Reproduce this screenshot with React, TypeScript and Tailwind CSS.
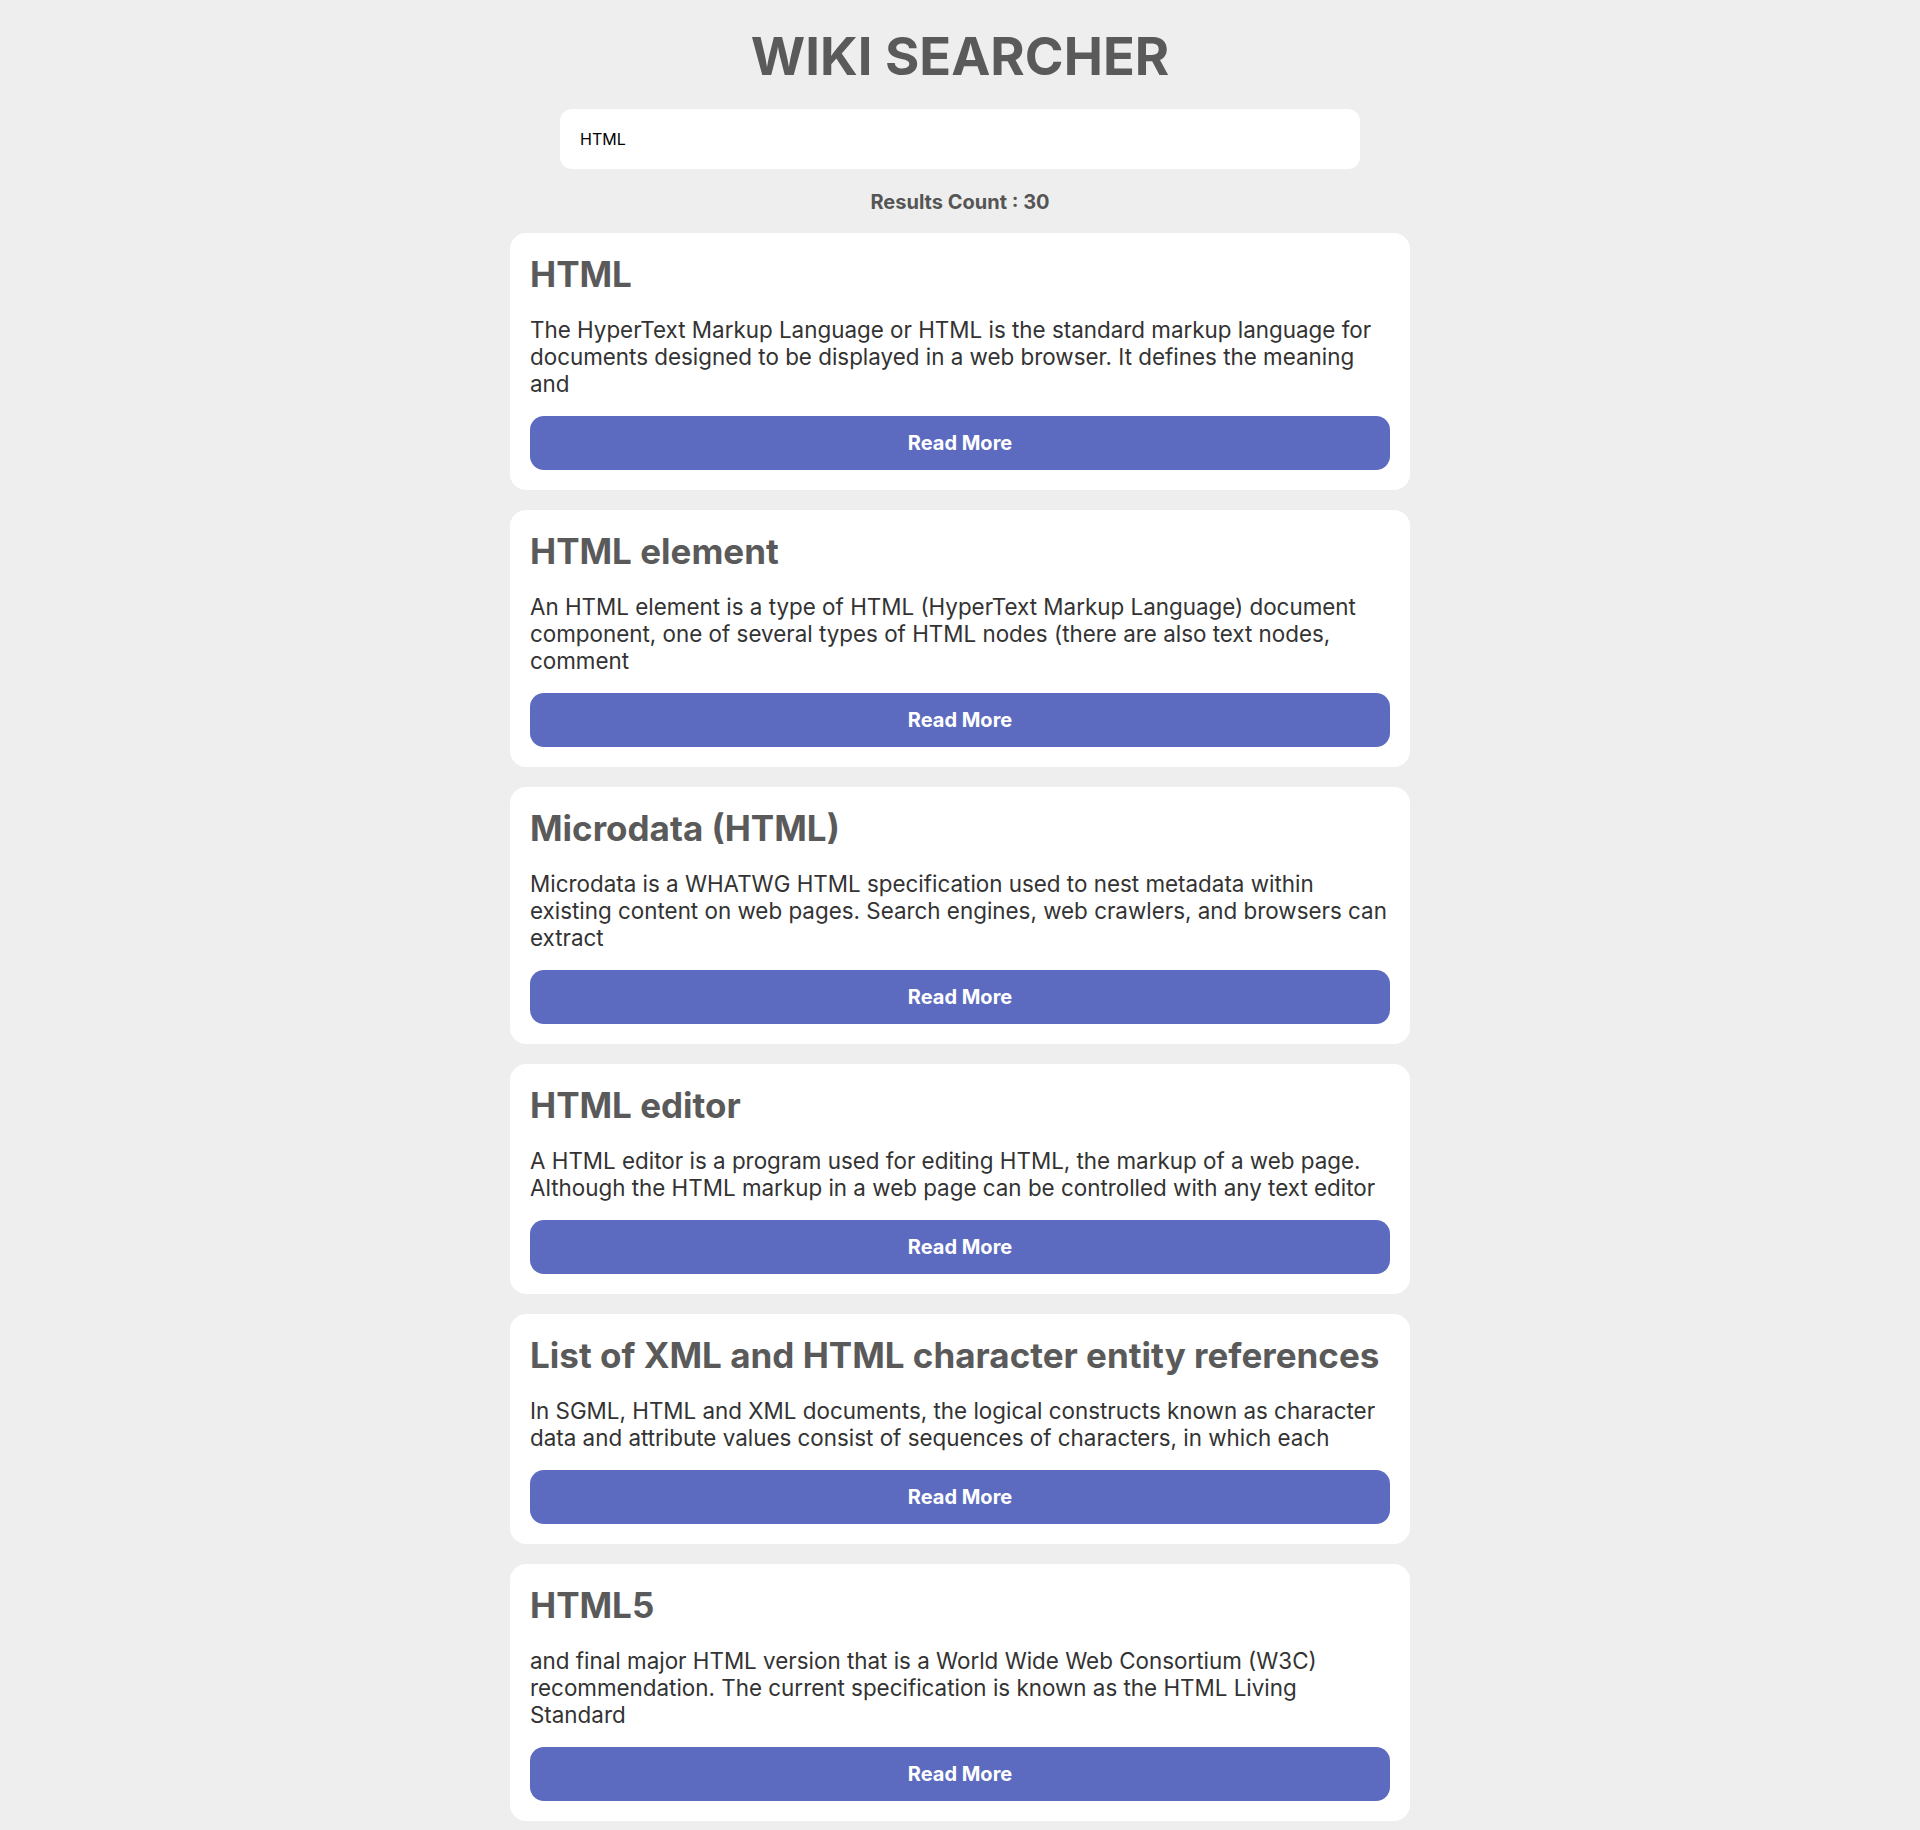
import { useState } from 'react';

interface WikiResult {
  title: string;
  snippet: string;
}

const results: WikiResult[] = [
  {
    title: 'HTML',
    snippet:
      'The HyperText Markup Language or HTML is the standard markup language for documents designed to be displayed in a web browser. It defines the meaning and',
  },
  {
    title: 'HTML element',
    snippet:
      'An HTML element is a type of HTML (HyperText Markup Language) document component, one of several types of HTML nodes (there are also text nodes, comment',
  },
  {
    title: 'Microdata (HTML)',
    snippet:
      'Microdata is a WHATWG HTML specification used to nest metadata within existing content on web pages. Search engines, web crawlers, and browsers can extract',
  },
  {
    title: 'HTML editor',
    snippet:
      'A HTML editor is a program used for editing HTML, the markup of a web page. Although the HTML markup in a web page can be controlled with any text editor',
  },
  {
    title: 'List of XML and HTML character entity references',
    snippet:
      'In SGML, HTML and XML documents, the logical constructs known as character data and attribute values consist of sequences of characters, in which each',
  },
  {
    title: 'HTML5',
    snippet:
      'and final major HTML version that is a World Wide Web Consortium (W3C) recommendation. The current specification is known as the HTML Living Standard',
  },
];

function ResultCard({ result }: { result: WikiResult }) {
  return (
    <div className="w-[900px] bg-white rounded-2xl px-5 pt-[19px] pb-5">
      <h2 className="text-[35px] leading-[44px] font-bold text-[#5a5a5a]">{result.title}</h2>
      <p className="mt-5 text-[22.4px] leading-[27px] text-[#333333]">{result.snippet}</p>
      <button className="mt-[19px] w-full h-[54px] rounded-[14px] bg-[#5c6bc0] text-white text-[20px] font-bold">
        Read More
      </button>
    </div>
  );
}

export default function App() {
  const [query, setQuery] = useState('HTML');

  return (
    <div className="min-h-screen bg-[#eeeeee] font-[Inter,sans-serif] flex flex-col items-center pt-6 pb-[9px]">
      <h1 className="text-[52.5px] leading-[65px] font-bold text-[#5a5a5a]">WIKI SEARCHER</h1>
      <input
        value={query}
        onChange={(e) => setQuery(e.target.value)}
        className="mt-5 w-[800px] h-[60px] rounded-xl bg-white px-5 text-base text-black outline-none"
      />
      <p className="mt-[21px] text-[20px] leading-[24px] font-bold text-[#555555]">Results Count : 30</p>
      <div className="mt-[19px] flex flex-col gap-5">
        {results.map((r) => (
          <ResultCard key={r.title} result={r} />
        ))}
      </div>
    </div>
  );
}
